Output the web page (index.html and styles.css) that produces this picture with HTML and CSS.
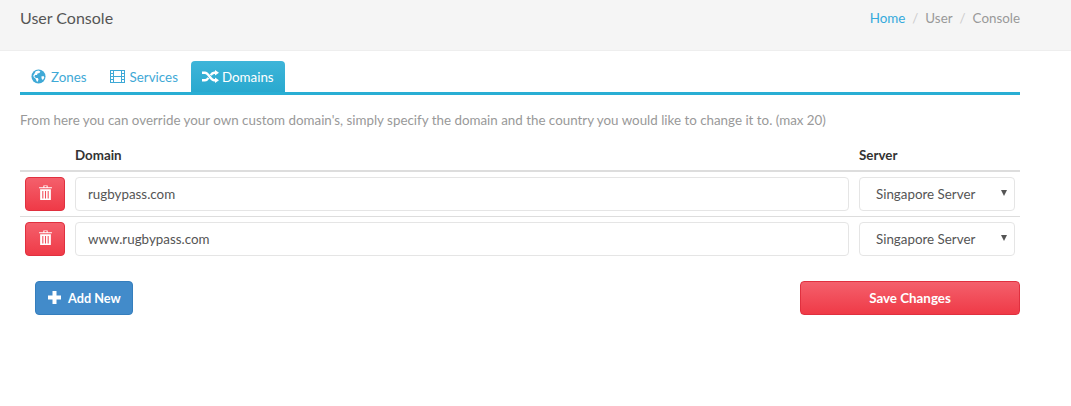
FILE: index.html
```html
<!DOCTYPE html>
<html lang="en">
<head>
<meta charset="utf-8">
<title>User Console</title>
<link rel="stylesheet" href="styles.css">
</head>
<body>
<header class="page-head">
  <h1 class="page-title">User Console</h1>
  <ol class="crumbs">
    <li><a href="#">Home</a></li>
    <li class="sep">/</li>
    <li>User</li>
    <li class="sep">/</li>
    <li>Console</li>
  </ol>
</header>
<main class="content">
  <nav class="tabs">
    <a class="tab" href="#">
      <svg class="ico" viewBox="0 0 16 16"><circle cx="8" cy="8" r="7.5" fill="currentColor"/><path d="M5 2.500l3-.8 2 1-1 1.600-2 .4-.6 1.600-2 .2-.8 1.600 1.600 1.400 2 .2.8 1.400-.8 2.600-1.200-.6-1-2.600-2-1.600-.6-2 1.400-2.200z M11 8l2.400-.6.8 2-1.600 2.400-1.200-1.400z" fill="#fff"/></svg>
      <span>Zones</span>
    </a>
    <a class="tab" href="#">
      <svg class="ico ico-film" viewBox="0 0 15 13"><path fill-rule="evenodd" d="M0 0h15v13H0zM1 1v2h2V1zM1 4v2h2V4zM1 7v2h2V7zM1 10v2h2v-2zM12 1v2h2V1zM12 4v2h2V4zM12 7v2h2V7zM12 10v2h2v-2zM4 1v5h7V1zM4 7v5h7V7z" fill="currentColor"/></svg>
      <span>Services</span>
    </a>
    <a class="tab tab-active" href="#">
      <svg class="ico ico-shuffle" viewBox="0 0 17 13"><path d="M0 2.700h3c3.600 0 5.600 7.600 9.200 7.600h1.300M0 10.300h3c1.400 0 2.500-1.100 3.400-2.500M8.700 5.200c.9-1.400 2-2.500 3.500-2.500h1.300" fill="none" stroke="currentColor" stroke-width="2.400"/><path d="M13 0l4 2.700-4 2.700zM13 7.600l4 2.700-4 2.700z" fill="currentColor"/></svg>
      <span>Domains</span>
    </a>
  </nav>
  <p class="intro">From here you can override your own custom domain's, simply specify the domain and the country you would like to change it to. (max 20)</p>
  <table class="domains">
    <thead>
      <tr><th class="col-action"></th><th>Domain</th><th class="col-server">Server</th></tr>
    </thead>
    <tbody>
      <tr>
        <td><button class="btn-del" type="button" aria-label="Delete">
          <svg class="trash" viewBox="0 0 12 14"><path d="M4 2V.5h4V2h4v1H0V2zM5 1v1h2V1z M1 4h10v10H1z M3 5.500v7h1v-7z M5.500 5.500v7h1v-7z M8 5.500v7h1v-7z" fill="currentColor" fill-rule="evenodd"/></svg>
        </button></td>
        <td><input class="field" type="text" value="rugbypass.com"></td>
        <td><span class="pick-wrap"><select class="field pick"><option>Singapore Server</option></select></span></td>
      </tr>
      <tr>
        <td><button class="btn-del" type="button" aria-label="Delete">
          <svg class="trash" viewBox="0 0 12 14"><path d="M4 2V.5h4V2h4v1H0V2zM5 1v1h2V1z M1 4h10v10H1z M3 5.500v7h1v-7z M5.500 5.500v7h1v-7z M8 5.500v7h1v-7z" fill="currentColor" fill-rule="evenodd"/></svg>
        </button></td>
        <td><input class="field" type="text" value="www.rugbypass.com"></td>
        <td><span class="pick-wrap"><select class="field pick"><option>Singapore Server</option></select></span></td>
      </tr>
    </tbody>
  </table>
  <div class="actions">
    <button class="btn-add" type="button">
      <svg class="plus" viewBox="0 0 13 13"><path d="M4.500 0h4v4.500H13v4H8.500V13h-4V8.500H0v-4h4.500z" fill="currentColor"/></svg>
      <span>Add New</span>
    </button>
    <button class="btn-save" type="button">Save Changes</button>
  </div>
</main>
</body>
</html>
```
FILE: styles.css
```css
* { box-sizing: border-box; }
html, body { margin: 0; padding: 0; }
body {
  background: #fff;
  color: #555;
  font-family: Lato, "Noto Sans", sans-serif;
  font-size: 13.37px;
  line-height: 18px;
}
a { text-decoration: none; color: inherit; }
.page-head {
  height: 51px;
  background: #f5f5f5;
  border-bottom: 1px solid #eee;
  padding: 9px 51px 0 20px;
  display: flex;
  justify-content: space-between;
  align-items: flex-start;
}
.page-title {
  margin: 0;
  font-size: 16px;
  font-weight: 400;
  line-height: 18px;
  color: #555;
}
.crumbs {
  list-style: none;
  display: flex;
  gap: 7px;
  margin: 0;
  padding: 0;
  color: #999;
}
.crumbs a { color: #35aadc; }
.crumbs .sep { color: #ccc; }
.content { padding: 10px 51px 0 20px; }
.tabs {
  display: flex;
  gap: 1px;
  height: 34px;
  border-bottom: 3px solid #29aed4;
}
.tab {
  height: 31px;
  padding: 0 11px;
  display: flex;
  align-items: center;
  gap: 5px;
  color: #3fa9d6;
  border-radius: 4px 4px 0 0;
}
.tab-active {
  margin-left: 1px;
  gap: 3px;
  color: #fff;
  background: linear-gradient(#3eb5d9, #29a9cf);
}
.ico { width: 15px; height: 15px; flex: none; }
.ico-film { height: 13px; }
.ico-shuffle { width: 17px; height: 13px; }
.intro {
  margin: 16px 0 0;
  color: #999;
  line-height: 18px;
}
.domains {
  width: 100%;
  margin-top: 16px;
  border-collapse: collapse;
  table-layout: fixed;
}
.domains th {
  text-align: left;
  color: #333;
  font-weight: 700;
  padding: 0 0 6px 5px;
  height: 26px;
  border-bottom: 2px solid #ddd;
}
.col-action { width: 50px; }
.col-server { width: 166px; }
.domains td {
  padding: 5px;
  border-bottom: 1px solid #ddd;
  height: 45px;
  vertical-align: top;
}
.domains tr:last-child td { border-bottom: 0; }
.btn-del {
  display: flex;
  align-items: center;
  justify-content: center;
  width: 40px;
  height: 34px;
  padding: 0 0 4px;
  border: 1px solid #e0303f;
  border-radius: 4px;
  background: linear-gradient(#f4606c, #ef3a47);
  color: #fff;
}
.trash { width: 13px; height: 15px; }
.field {
  display: block;
  width: 100%;
  height: 34px;
  padding: 0 12px;
  border: 1px solid #e5e5e5;
  border-radius: 4px;
  background: #fff;
  color: #555;
  font: inherit;
}
.pick-wrap { display: block; position: relative; }
.pick-wrap::after {
  content: "";
  position: absolute;
  top: 13px;
  right: 8px;
  border-left: 3px solid transparent;
  border-right: 3px solid transparent;
  border-top: 6px solid #555;
}
.pick {
  appearance: none;
  padding-left: 16px;
}
.actions {
  display: flex;
  justify-content: space-between;
  margin-top: 19px;
  padding-left: 15px;
}
.btn-add, .btn-save {
  height: 34px;
  border-radius: 4px;
  color: #fff;
  font: inherit;
  font-weight: 700;
}
.btn-add {
  display: flex;
  align-items: center;
  gap: 7px;
  width: 98px;
  padding: 0 12px;
  background: #428bca;
  border: 1px solid #357ebd;
  white-space: nowrap;
}
.btn-add span { font-size: 12.7px; }
.plus { width: 13px; height: 13px; flex: none; }
.btn-save {
  width: 220px;
  background: linear-gradient(#f4606c, #ef3a47);
  border: 1px solid #e0303f;
}
```
